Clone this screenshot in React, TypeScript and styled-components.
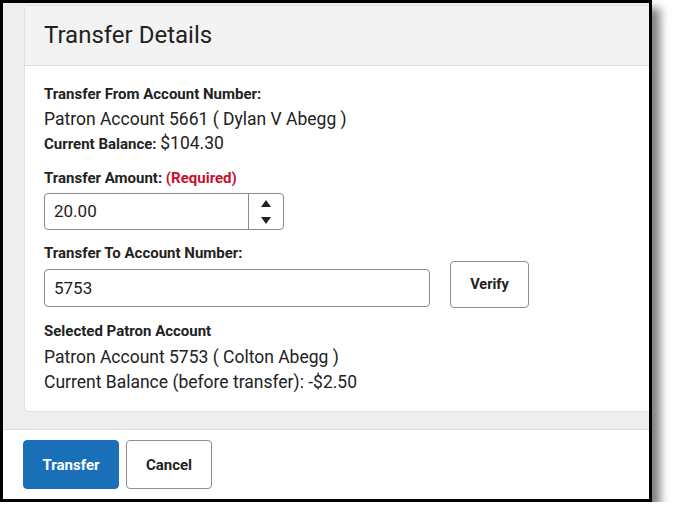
import styled, { createGlobalStyle } from "styled-components"

const GlobalStyle = createGlobalStyle`
  html, body {
    margin: 0;
    padding: 0;
    background: #ffffff;
  }
  body {
    font-family: Roboto, "Liberation Sans", Arial, sans-serif;
    color: #222222;
  }
  * { box-sizing: border-box; }
`

const Frame = styled.div`
  width: 652px;
  height: 502px;
  border: 3px solid #000;
  box-shadow: 8px 8px 9px rgba(0, 0, 0, 0.5);
  display: flex;
  flex-direction: column;
  overflow: hidden;
  background: #fff;
`

const Main = styled.div`
  flex: 1;
  background: #eeeeee;
  padding: 2px 0 17px 21px;
  border-bottom: 1px solid #dcdcdc;
`

const Card = styled.div`
  margin-right: -30px;
  height: 100%;
  background: #fff;
  border: 1px solid #e0e0e0;
  border-radius: 4px;
  display: flex;
  flex-direction: column;
`

const CardHeader = styled.div`
  height: 60px;
  background: #f3f3f3;
  border-bottom: 1px solid #dddddd;
  padding: 13px 19px 0 19px;
  font-size: 24px;
  line-height: 32px;
  color: #222;
`

const CardBody = styled.div`
  padding: 18px 19px 0 19px;
`

const Label = styled.div<{ $top?: number }>`
  font-size: 15px;
  font-weight: 700;
  line-height: 20px;
  margin-top: ${(p) => p.$top ?? 0}px;
`

const Required = styled.span`
  color: #c8102e;
`

const Value = styled.div<{ $top?: number }>`
  font-size: 17.5px;
  line-height: 24px;
  margin-top: ${(p) => p.$top ?? 0}px;
`

const BalanceRow = styled.div`
  font-size: 15px;
  font-weight: 700;
  line-height: 24px;
  span {
    font-size: 17.5px;
    font-weight: 400;
  }
`

const NumberBox = styled.div`
  margin-top: 5px;
  width: 240px;
  height: 37px;
  border: 1px solid #8a8a8a;
  border-radius: 4px;
  display: flex;
`

const NumberText = styled.div`
  flex: 1;
  padding-left: 9px;
  font-size: 17px;
  line-height: 35px;
`

const Spinner = styled.div`
  width: 35px;
  border-left: 1px solid #8a8a8a;
  display: flex;
  flex-direction: column;
  align-items: center;
  justify-content: center;
  gap: 10px;
`

const ToRow = styled.div`
  display: flex;
  align-items: flex-start;
  gap: 20px;
  margin-top: -2px;
`

const TextBox = styled.div`
  margin-top: 8px;
  width: 386px;
  height: 38px;
  border: 1px solid #8a8a8a;
  border-radius: 4px;
  padding-left: 9px;
  font-size: 17px;
  line-height: 36px;
`

const Button = styled.button<{ $primary?: boolean; $w: number; $h: number; $fs?: number }>`
  width: ${(p) => p.$w}px;
  height: ${(p) => p.$h}px;
  border-radius: 4px;
  border: 1px solid ${(p) => (p.$primary ? "#1a70b8" : "#8e8e8e")};
  background: ${(p) => (p.$primary ? "#1a70b8" : "#ffffff")};
  color: ${(p) => (p.$primary ? "#ffffff" : "#222222")};
  font-family: Roboto, "Liberation Sans", Arial, sans-serif;
  font-size: ${(p) => p.$fs ?? 15}px;
  font-weight: 700;
  padding: 0;
  cursor: pointer;
`

const Footer = styled.div`
  height: 69px;
  flex-shrink: 0;
  background: #fff;
  padding: 10px 20px 0 20px;
  display: flex;
  gap: 7px;
`

const Arrow = ({ up }: { up?: boolean }) => (
  <svg width="10" height="7" viewBox="0 0 10 7">
    <path d={up ? "M5 0 L10 7 L0 7 Z" : "M0 0 L10 0 L5 7 Z"} fill="#222" />
  </svg>
)

export default function App() {
  return (
    <>
      <GlobalStyle />
      <Frame>
        <Main>
          <Card>
            <CardHeader>Transfer Details</CardHeader>
            <CardBody>
              <Label>Transfer From Account Number:</Label>
              <Value $top={3}>Patron Account 5661 ( Dylan V Abegg )</Value>
              <BalanceRow>
                Current Balance: <span>$104.30</span>
              </BalanceRow>
              <Label $top={12}>
                Transfer Amount: <Required>(Required)</Required>
              </Label>
              <NumberBox>
                <NumberText>20.00</NumberText>
                <Spinner>
                  <Arrow up />
                  <Arrow />
                </Spinner>
              </NumberBox>
              <Label $top={13}>Transfer To Account Number:</Label>
              <ToRow>
                <TextBox>5753</TextBox>
                <Button $w={79} $h={47} $fs={14.5}>Verify</Button>
              </ToRow>
              <Label $top={13}>Selected Patron Account</Label>
              <Value $top={4}>Patron Account 5753 ( Colton Abegg )</Value>
              <Value $top={1}>Current Balance (before transfer): -$2.50</Value>
            </CardBody>
          </Card>
        </Main>
        <Footer>
          <Button $primary $w={96} $h={49}>Transfer</Button>
          <Button $w={86} $h={49}>Cancel</Button>
        </Footer>
      </Frame>
    </>
  )
}
